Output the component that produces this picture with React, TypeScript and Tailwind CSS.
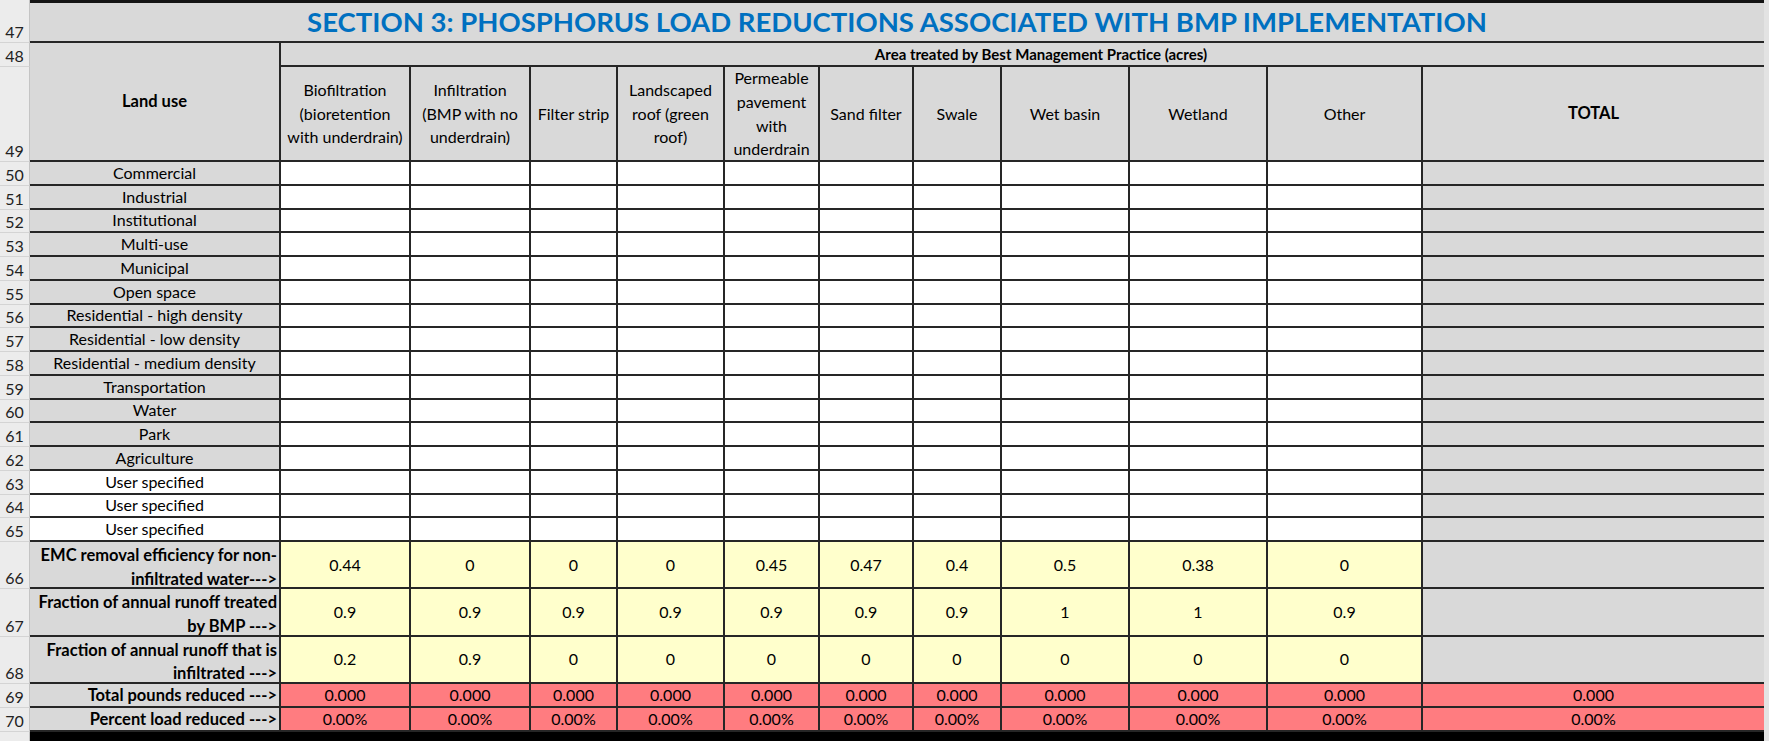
import React from "react";

const BMPS: string[][] = [
  ["Biofiltration", "(bioretention", "with underdrain)"],
  ["Infiltration", "(BMP with no", "underdrain)"],
  ["Filter strip"],
  ["Landscaped", "roof (green", "roof)"],
  ["Permeable", "pavement", "with", "underdrain"],
  ["Sand filter"],
  ["Swale"],
  ["Wet basin"],
  ["Wetland"],
  ["Other"],
];

const LAND: [number, string, boolean][] = [
  [50, "Commercial", true],
  [51, "Industrial", true],
  [52, "Institutional", true],
  [53, "Multi-use", true],
  [54, "Municipal", true],
  [55, "Open space", true],
  [56, "Residential - high density", true],
  [57, "Residential - low density", true],
  [58, "Residential - medium density", true],
  [59, "Transportation", true],
  [60, "Water", true],
  [61, "Park", true],
  [62, "Agriculture", true],
  [63, "User specified", false],
  [64, "User specified", false],
  [65, "User specified", false],
];

const FACTORS: [number, string[], string[]][] = [
  [66, ["EMC removal efficiency for non-", "infiltrated water--->"], ["0.44", "0", "0", "0", "0.45", "0.47", "0.4", "0.5", "0.38", "0"]],
  [67, ["Fraction of annual runoff treated", "by BMP --->"], ["0.9", "0.9", "0.9", "0.9", "0.9", "0.9", "0.9", "1", "1", "0.9"]],
  [68, ["Fraction of annual runoff that is", "infiltrated --->"], ["0.2", "0.9", "0", "0", "0", "0", "0", "0", "0", "0"]],
];

const RESULTS: [number, string, string][] = [
  [69, "Total pounds reduced --->", "0.000"],
  [70, "Percent load reduced --->", "0.00%"],
];

function RH({ n }: { n?: number }) {
  return (
    <div className="bg-[#ececec] border-r border-b border-r-[#c4c4c4] border-b-[#d4d4d4] flex items-end justify-center overflow-hidden text-[16px] leading-[21px] text-[#222]">
      {n ?? ""}
    </div>
  );
}

const LINE = "border-b-2 border-r-2 border-[#262626]";

export default function App() {
  return (
    <div className="w-[1769px] h-[741px] flex overflow-hidden bg-[#e3e3e3] font-['Lato',sans-serif] text-[16px] text-black">
      <div className="grid grid-cols-[30px_251px_130px_120px_87px_107px_95px_94px_88px_128px_138px_155px_341px] grid-rows-[3px_40px_24px_95px_repeat(16,23.75px)_repeat(3,47.333px)_24px_24px_9px] w-[1764px] h-[741px]">
        {/* row 46 remnant */}
        <div className="bg-[#ececec] border-r border-r-[#c4c4c4]" />
        <div className="col-span-12 bg-[#141414]" />

        {/* row 47 title */}
        <RH n={47} />
        <div className="col-span-12 bg-[#d9d9d9] border-b-2 border-[#262626] flex items-center justify-center">
          <span className="text-[#0070c0] font-bold text-[27.5px] leading-none whitespace-nowrap">
            SECTION 3: PHOSPHORUS LOAD REDUCTIONS ASSOCIATED WITH BMP IMPLEMENTATION
          </span>
        </div>

        {/* row 48 */}
        <RH n={48} />
        <div className={`row-span-2 bg-[#d9d9d9] ${LINE} flex items-center justify-center font-bold text-[16.5px]`}>
          Land use
        </div>
        <div className="col-span-11 bg-[#d9d9d9] border-b-2 border-[#262626] flex items-center overflow-hidden">
          <div className="w-[1520px] shrink-0 text-center font-bold text-[15px] whitespace-nowrap">
            Area treated by Best Management Practice (acres)
          </div>
        </div>

        {/* row 49 headers */}
        <RH n={49} />
        {BMPS.map((lines, i) => (
          <div
            key={i}
            className={`bg-[#d9d9d9] ${LINE} flex items-center justify-center text-center leading-[23.6px] whitespace-nowrap`}
          >
            <div>
              {lines.map((l, j) => (
                <div key={j}>{l}</div>
              ))}
            </div>
          </div>
        ))}
        <div className="bg-[#d9d9d9] border-b-2 border-[#262626] flex items-center justify-center font-bold text-[16.5px]">
          TOTAL
        </div>

        {/* rows 50-65 */}
        {LAND.map(([n, name, gray]) => (
          <React.Fragment key={n}>
            <RH n={n} />
            <div
              className={`${gray ? "bg-[#d9d9d9]" : "bg-white"} ${LINE} flex items-center justify-center whitespace-nowrap`}
            >
              {name}
            </div>
            {BMPS.map((_, i) => (
              <div key={i} className={`bg-white ${LINE}`} />
            ))}
            <div className="bg-[#d9d9d9] border-b-2 border-[#262626]" />
          </React.Fragment>
        ))}

        {/* rows 66-68 */}
        {FACTORS.map(([n, label, vals]) => (
          <React.Fragment key={n}>
            <RH n={n} />
            <div className={`bg-[#d9d9d9] ${LINE} pt-[2px] pr-[2px] text-right font-bold text-[16.5px] leading-[23.6px] whitespace-nowrap`}>
              {label.map((l, j) => (
                <div key={j}>{l}</div>
              ))}
            </div>
            {vals.map((v, i) => (
              <div key={i} className={`bg-[#ffffcc] ${LINE} flex items-center justify-center`}>
                {v}
              </div>
            ))}
            <div className="bg-[#d9d9d9] border-b-2 border-[#262626]" />
          </React.Fragment>
        ))}

        {/* rows 69-70 */}
        {RESULTS.map(([n, label, v]) => (
          <React.Fragment key={n}>
            <RH n={n} />
            <div className={`bg-[#d9d9d9] ${LINE} pr-[2px] flex items-center justify-end font-bold text-[16.5px] whitespace-nowrap`}>
              {label}
            </div>
            {BMPS.map((_, i) => (
              <div key={i} className={`bg-[#ff7c80] ${LINE} flex items-center justify-center`}>
                {v}
              </div>
            ))}
            <div className="bg-[#ff7c80] border-b-2 border-[#262626] flex items-center justify-center">
              {v}
            </div>
          </React.Fragment>
        ))}

        {/* row 71 remnant */}
        <div className="bg-[#ececec] border-r border-r-[#c4c4c4] overflow-hidden" />
        <div className="col-span-12 bg-black" />
      </div>
      <div className="w-[5px] h-[741px] bg-[#e3e3e3]" />
    </div>
  );
}
